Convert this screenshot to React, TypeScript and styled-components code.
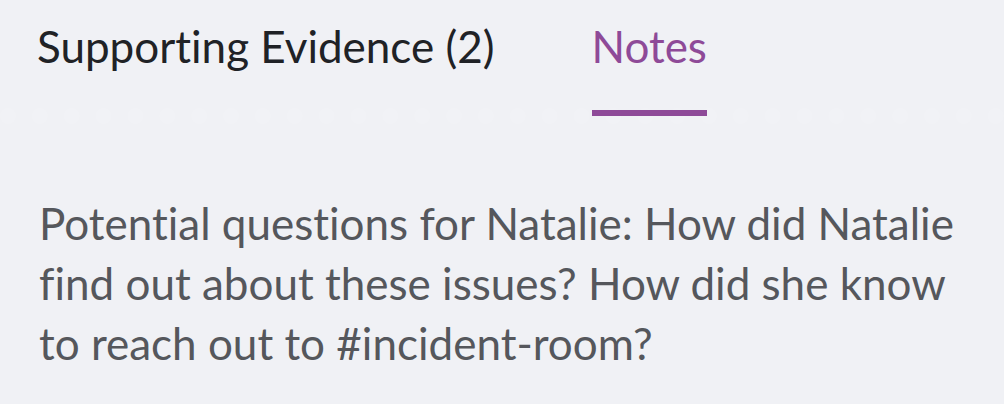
import React, { useState } from "react";
import styled, { createGlobalStyle } from "styled-components";

const GlobalStyle = createGlobalStyle`
  html, body {
    margin: 0;
    background: #f0f1f5;
  }
  body {
    font-family: Lato, "Open Sans", sans-serif;
    font-variant-ligatures: none;
    -webkit-font-smoothing: antialiased;
  }
`;

const Page = styled.div`
  width: 1004px;
  height: 404px;
  overflow: hidden;
  background: #f0f1f5;
`;

const TabBar = styled.div`
  display: flex;
  align-items: flex-start;
  gap: 97px;
  padding-left: 37px;
  border-bottom: 16px dotted rgba(255, 255, 255, 0.12);
`;

const Tab = styled.button<{ $active?: boolean }>`
  appearance: none;
  background: none;
  border: 0;
  border-bottom: 6px solid ${(p) => (p.$active ? "#8e4a98" : "transparent")};
  margin: 0 0 -8px;
  padding: 20px 0 38px;
  font-family: inherit;
  font-variant-ligatures: none;
  font-feature-settings: "liga" 0, "clig" 0;
  font-size: 44px;
  line-height: 52px;
  font-weight: 400;
  color: ${(p) => (p.$active ? "#8e4a98" : "#202226")};
  cursor: pointer;
`;

const NoteBody = styled.p`
  margin: 69px 0 0;
  padding: 0 39px;
  font-size: 44px;
  line-height: 60px;
  font-feature-settings: "liga" 0, "clig" 0;
  color: #55575c;
`;

export default function App() {
  const [tab, setTab] = useState("notes");
  return (
    <Page>
      <GlobalStyle />
      <TabBar>
        <Tab $active={tab === "evidence"} onClick={() => setTab("evidence")}>
          Supporting Evidence (2)
        </Tab>
        <Tab $active={tab === "notes"} onClick={() => setTab("notes")}>
          Notes
        </Tab>
      </TabBar>
      <NoteBody>
        Potential questions for Natalie: How did Natalie find out about these
        issues? How did she know to reach out to #incident-room?
      </NoteBody>
    </Page>
  );
}
